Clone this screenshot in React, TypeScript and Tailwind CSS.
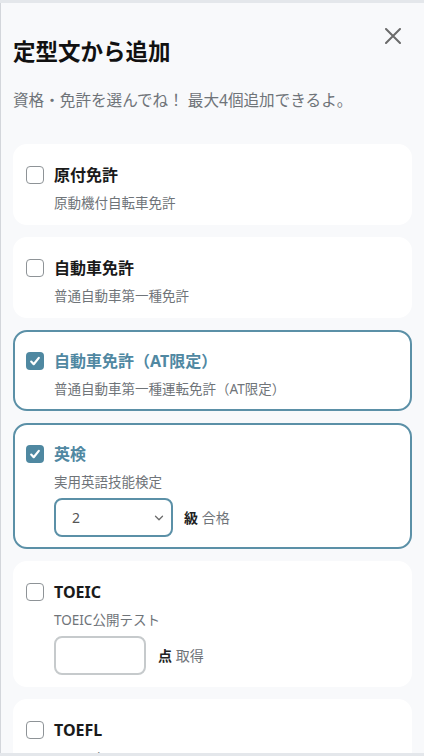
import { useState } from "react";

type Item = {
  id: string;
  title: string;
  sub: string;
  kind?: "grade" | "score";
};

const items: Item[] = [
  { id: "gentsuki", title: "原付免許", sub: "原動機付自転車免許" },
  { id: "car", title: "自動車免許", sub: "普通自動車第一種免許" },
  { id: "car-at", title: "自動車免許（AT限定）", sub: "普通自動車第一種運転免許（AT限定）" },
  { id: "eiken", title: "英検", sub: "実用英語技能検定", kind: "grade" },
  { id: "toeic", title: "TOEIC", sub: "TOEIC公開テスト", kind: "score" },
  { id: "toefl", title: "TOEFL", sub: "TOEFL iBT", kind: "score" },
];

function CheckBox({ checked }: { checked: boolean }) {
  if (checked) {
    return (
      <span className="mt-[3px] flex h-[18px] w-[18px] shrink-0 items-center justify-center rounded-[4px] bg-[#4f88a1]">
        <svg width="18" height="18" viewBox="0 0 18 18" fill="none" aria-hidden="true">
          <path
            d="M5.2 9.6l2.5 2.6L12.8 5.9"
            stroke="#fff"
            strokeWidth="2.2"
            strokeLinecap="round"
            strokeLinejoin="round"
          />
        </svg>
      </span>
    );
  }
  return (
    <span className="mt-[3px] block h-[18px] w-[18px] shrink-0 rounded-[4px] border-[1.5px] border-[#8e9397] bg-white" />
  );
}

export default function App() {
  const [selected, setSelected] = useState<string[]>(["car-at", "eiken"]);

  const toggle = (id: string) =>
    setSelected((s) => (s.includes(id) ? s.filter((x) => x !== id) : [...s, id]));

  return (
    <div className="h-[756px] w-[424px] overflow-hidden bg-[#e4e7eb] py-[3px] font-['Noto_Sans','Noto_Sans_CJK_JP',sans-serif]">
      <div className="h-full overflow-hidden border-l border-[#d3d6db] bg-[#f8f9fb] px-3">
        {/* header */}
        <div className="flex items-start justify-between">
          <div className="pt-8">
            <h1 className="text-[22.5px] font-bold leading-[33px] text-[#111]">定型文から追加</h1>
            <p className="mt-[21px] text-[15.6px] leading-[22px] text-[#6f7479]">
              資格・免許を選んでね！ 最大4個追加できるよ。
            </p>
          </div>
          <button type="button" className="mr-[11px] mt-[25px]" aria-label="閉じる">
            <svg width="16" height="16" viewBox="0 0 16 16" fill="none" aria-hidden="true">
              <path d="M1 1l14 14M15 1L1 15" stroke="#6b6b6b" strokeWidth="2" strokeLinecap="round" />
            </svg>
          </button>
        </div>

        {/* list */}
        <div className="mt-[33px] flex flex-col gap-3">
          {items.map((item) => {
            const on = selected.includes(item.id);
            return (
              <div
                key={item.id}
                onClick={() => toggle(item.id)}
                className={
                  on
                    ? "flex cursor-pointer gap-[10px] rounded-[14px] border-2 border-[#5b90a7] bg-white pb-[10px] pl-[11px] pr-3 pt-[17px]"
                    : "flex cursor-pointer gap-[10px] rounded-[14px] border-2 border-white bg-white pb-[10px] pl-[11px] pr-3 pt-[17px]"
                }
              >
                <CheckBox checked={on} />
                <div className="flex flex-col">
                  <div
                    className={
                      on
                        ? "text-base font-bold leading-6 text-[#5088a2]"
                        : "text-base font-bold leading-6 text-[#1a1a1a]"
                    }
                  >
                    {item.title}
                  </div>
                  <div className="mt-1.5 text-[13.5px] leading-5 text-[#6f7479]">{item.sub}</div>
                  {item.kind === "grade" && (
                    <div className="mt-[6px] flex items-center gap-[11px]" onClick={(e) => e.stopPropagation()}>
                      <div className="flex h-[39px] w-[119px] items-center justify-between rounded-lg border-2 border-[#5b90a7] bg-white pl-[16px] pr-[5px]">
                        <span className="text-sm text-[#555]">2</span>
                        <svg width="14" height="14" viewBox="0 0 24 24" fill="none" aria-hidden="true">
                          <path d="M6 9l6 6 6-6" stroke="#6b6b6b" strokeWidth="2.2" strokeLinecap="round" strokeLinejoin="round" />
                        </svg>
                      </div>
                      <span className="text-sm">
                        <span className="font-bold text-[#222]">級</span>
                        <span className="text-[#6f7479]"> 合格</span>
                      </span>
                    </div>
                  )}
                  {item.kind === "score" && (
                    <div className="mt-[6px] flex items-center gap-3" onClick={(e) => e.stopPropagation()}>
                      <input
                        type="text"
                        className="h-[39px] w-[92px] rounded-lg border-2 border-[#c6cacc] bg-white px-3 text-sm outline-none"
                      />
                      <span className="text-sm">
                        <span className="font-bold text-[#222]">点</span>
                        <span className="text-[#6f7479]"> 取得</span>
                      </span>
                    </div>
                  )}
                </div>
              </div>
            );
          })}
        </div>
      </div>
    </div>
  );
}
